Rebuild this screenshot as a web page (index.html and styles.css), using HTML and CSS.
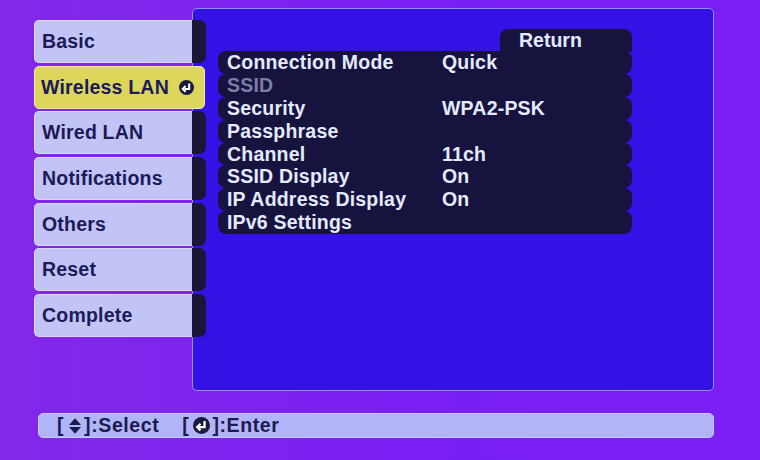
FILE: index.html
```html
<!DOCTYPE html>
<html lang="en">
<head>
  <meta charset="UTF-8">
  <title>Network Settings</title>
  <link rel="stylesheet" href="styles.css">
</head>
<body>
  <div class="screen">
    <div class="main">
      <!-- left tabs -->
      <div class="tabs">
        <div class="tab"><span class="tab-label">Basic</span><span class="tab-end"></span></div>
        <div class="tab selected">
          <span class="tab-label">Wireless LAN</span>
          <svg class="enter-icon" width="15" height="15" viewBox="0 0 14 14">
            <circle cx="7" cy="7" r="7" fill="#1c1a3c"/>
            <path d="M9.5 3.2V8.3H5" fill="none" stroke="#fff" stroke-width="1.9"/>
            <path d="M6.2 5.6L3.4 8.3 6.2 11" fill="none" stroke="#fff" stroke-width="1.8"/>
          </svg>
        </div>
        <div class="tab"><span class="tab-label">Wired LAN</span><span class="tab-end"></span></div>
        <div class="tab"><span class="tab-label">Notifications</span><span class="tab-end"></span></div>
        <div class="tab"><span class="tab-label">Others</span><span class="tab-end"></span></div>
        <div class="tab"><span class="tab-label">Reset</span><span class="tab-end"></span></div>
        <div class="tab"><span class="tab-label">Complete</span><span class="tab-end"></span></div>
      </div>

      <!-- settings panel -->
      <div class="panel">
        <div class="return-row"><div class="return-btn">Return</div></div>
        <div class="rows">
          <div class="row"><span class="name">Connection Mode</span><span class="value">Quick</span></div>
          <div class="row disabled"><span class="name">SSID</span><span class="value"></span></div>
          <div class="row"><span class="name">Security</span><span class="value">WPA2-PSK</span></div>
          <div class="row"><span class="name">Passphrase</span><span class="value"></span></div>
          <div class="row"><span class="name">Channel</span><span class="value">11ch</span></div>
          <div class="row"><span class="name">SSID Display</span><span class="value">On</span></div>
          <div class="row"><span class="name">IP Address Display</span><span class="value">On</span></div>
          <div class="row"><span class="name">IPv6 Settings</span><span class="value"></span></div>
        </div>
      </div>
    </div>

    <!-- help bar -->
    <div class="helpbar">
      <span>[<svg class="sel-icon" width="12" height="16" viewBox="0 0 11 14"><polygon points="5.5,0 11,6 0,6" fill="#1c1a50"/><polygon points="0,8 11,8 5.5,14" fill="#1c1a50"/></svg>]:Select</span>
      <span>[<svg class="help-enter" width="17" height="17" viewBox="0 0 14 14"><circle cx="7" cy="7" r="7" fill="#1c1a3c"/><path d="M9.5 3.2V8.3H5" fill="none" stroke="#fff" stroke-width="1.9"/><path d="M6.2 5.6L3.4 8.3 6.2 11" fill="none" stroke="#fff" stroke-width="1.8"/></svg>]:Enter</span>
    </div>
  </div>
</body>
</html>
```

FILE: styles.css
```css
body {
  margin: 0;
  width: 760px;
  height: 460px;
  overflow: hidden;
  background: linear-gradient(90deg, #8328e8, #7a1ef6 60%, #7b1ff4);
  font-family: "Liberation Sans", Arial, sans-serif;
  font-weight: bold;
}
.screen {
  padding: 8px 0 0 34px;
}
.main {
  display: flex;
  align-items: flex-start;
}
.tabs {
  position: relative;
  z-index: 1;
  margin-top: 12px;
  width: 172px;
  display: flex;
  flex-direction: column;
  gap: 2.7px;
}
.tab {
  height: 43px;
  display: flex;
  align-items: stretch;
}
.tab-label {
  width: 150px;
  padding-left: 7px;
  background: #c3c4f6;
  border: 1px solid #d8dafc;
  border-right: none;
  border-radius: 5px 0 0 5px;
  color: #1c1a58;
  font-size: 19.5px;
  letter-spacing: 0.2px;
  display: flex;
  align-items: center;
}
.tab-end {
  width: 14px;
  background: #1c1538;
  border-radius: 0 7px 7px 0;
}
.tab.selected {
  width: 171px;
  background: #dcd65c;
  border: 1px solid #eeeaa0;
  border-radius: 5px;
  box-sizing: border-box;
  align-items: center;
}
.tab.selected .tab-label {
  background: none;
  border: none;
  width: auto;
  flex: 1;
  height: 100%;
  padding-left: 6px;
}
.enter-icon {
  margin-right: 10px;
}
.panel {
  margin-left: -14px;
  width: 522px;
  height: 383px;
  background: #3412e6;
  border: 1px solid #8c92f6;
  border-radius: 5px;
  padding: 20px 81px 0 25px;
  box-sizing: border-box;
}
.return-row {
  display: flex;
  justify-content: flex-end;
}
.return-btn {
  width: 113px;
  height: 23px;
  background: #16143e;
  border-radius: 8px 8px 0 0;
  color: #e4eaff;
  font-size: 19.5px;
  line-height: 23px;
  padding-left: 19px;
  margin-bottom: -1px;
}
.rows {
  display: flex;
  flex-direction: column;
}
.row {
  height: 22.9px;
  background: #16143e;
  border-radius: 8px;
  display: flex;
  align-items: center;
  color: #e4eaff;
  font-size: 19.5px;
  letter-spacing: 0.2px;
  padding-left: 9px;
}
.row.disabled {
  color: #7c7ea6;
}
.row .name {
  width: 215px;
}
.helpbar {
  margin: 22px 0 0 4px;
  width: 676px;
  height: 25px;
  background: #b2b4f8;
  border: 1px solid #c8ccfc;
  border-radius: 5px;
  box-sizing: border-box;
  color: #1c1a50;
  font-size: 19.5px;
  letter-spacing: 0.6px;
  display: flex;
  align-items: center;
  gap: 23px;
  padding-left: 18px;
}
.helpbar span {
  display: flex;
  align-items: center;
}
.sel-icon {
  margin: 0 3px 0 5px;
}
.help-enter {
  margin: 0 2px 0 4px;
}
```
